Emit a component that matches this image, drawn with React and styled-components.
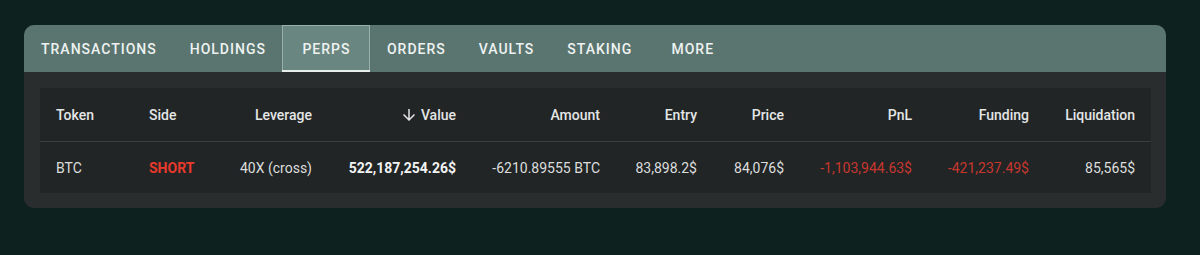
import React from "react";
import styled, { createGlobalStyle } from "styled-components";

const Global = createGlobalStyle`
  html, body { margin: 0; padding: 0; background: #0d211f; }
  body { font-family: Roboto, "Liberation Sans", sans-serif; -webkit-font-smoothing: antialiased; }
`;

const Page = styled.div`
  padding: 25px 0 0 24px;
  height: 255px;
  box-sizing: border-box;
`;

const Card = styled.div`
  width: 1142px;
  background: #2a2d2d;
  border-radius: 10px;
  overflow: hidden;
`;

const TabBar = styled.div`
  display: flex;
  height: 47px;
  background: #5a7570;
`;

const Tab = styled.div`
  position: relative;
  min-width: 88px;
  padding: 0 16px 0 17px;
  box-sizing: border-box;
  display: flex;
  align-items: center;
  justify-content: center;
  font-size: 14px;
  font-weight: 500;
  letter-spacing: 1px;
  text-transform: uppercase;
  color: #eef2f1;
  background: ${(p) => (p.$active ? "#6a8680" : "transparent")};
  box-shadow: ${(p) => (p.$active ? "inset 0 0 0 1px #98aea9" : "none")};
  ${(p) =>
    p.$active &&
    `&::after { content: ""; position: absolute; left: 0; right: 0; bottom: 0; height: 2px; background: #e8eeec; }`}
`;

const Body = styled.div`
  padding: 16px 15px 15px 16px;
`;

const Table = styled.table`
  width: 1111px;
  border-collapse: collapse;
  table-layout: fixed;
  background: #222525;
`;

const Th = styled.th`
  height: 53px;
  padding: 0 16px;
  font-size: 14px;
  font-weight: 500;
  color: #e4e6e6;
  text-align: ${(p) => p.$align || "right"};
  border-bottom: 1px solid #3a3e3e;
  white-space: nowrap;
`;

const Td = styled.td`
  height: 51px;
  padding: 0 16px;
  font-size: 14px;
  font-weight: ${(p) => (p.$bold ? 700 : 400)};
  color: ${(p) => p.$color || "#dcdede"};
  text-align: ${(p) => p.$align || "right"};
  white-space: nowrap;
`;

const SortIcon = styled.svg`
  width: 18px;
  height: 18px;
  margin-right: 3px;
  vertical-align: -4px;
  fill: #e4e6e6;
`;

const ArrowIcon = () => (
  <SortIcon viewBox="0 0 24 24">
    <path d="M20 12l-1.41-1.41L13 16.17V4h-2v12.17l-5.58-5.59L4 12l8 8 8-8z" />
  </SortIcon>
);

const tabs = ["Transactions", "Holdings", "Perps", "Orders", "Vaults", "Staking", "More"];

const cols = [
  { key: "Token", w: 93, align: "left" },
  { key: "Side", w: 87, align: "left" },
  { key: "Leverage", w: 108 },
  { key: "Value", w: 144, sort: true },
  { key: "Amount", w: 144 },
  { key: "Entry", w: 97 },
  { key: "Price", w: 87 },
  { key: "PnL", w: 128 },
  { key: "Funding", w: 117 },
  { key: "Liquidation", w: 106 },
];

const row = [
  { v: "BTC", align: "left" },
  { v: "SHORT", align: "left", bold: true, color: "#e8392c" },
  { v: "40X (cross)" },
  { v: "522,187,254.26$", bold: true, color: "#f2f3f3" },
  { v: "-6210.89555 BTC" },
  { v: "83,898.2$" },
  { v: "84,076$" },
  { v: "-1,103,944.63$", color: "#c8372f" },
  { v: "-421,237.49$", color: "#c8372f" },
  { v: "85,565$" },
];

export default function App() {
  return (
    <>
      <Global />
      <Page>
        <Card>
          <TabBar>
            {tabs.map((t) => (
              <Tab key={t} $active={t === "Perps"}>
                {t}
              </Tab>
            ))}
          </TabBar>
          <Body>
            <Table>
              <colgroup>
                {cols.map((c) => (
                  <col key={c.key} style={{ width: c.w }} />
                ))}
              </colgroup>
              <thead>
                <tr>
                  {cols.map((c) => (
                    <Th key={c.key} $align={c.align}>
                      {c.sort && <ArrowIcon />}
                      {c.key}
                    </Th>
                  ))}
                </tr>
              </thead>
              <tbody>
                <tr>
                  {row.map((c, i) => (
                    <Td key={i} $align={c.align} $bold={c.bold} $color={c.color}>
                      {c.v}
                    </Td>
                  ))}
                </tr>
              </tbody>
            </Table>
          </Body>
        </Card>
      </Page>
    </>
  );
}
